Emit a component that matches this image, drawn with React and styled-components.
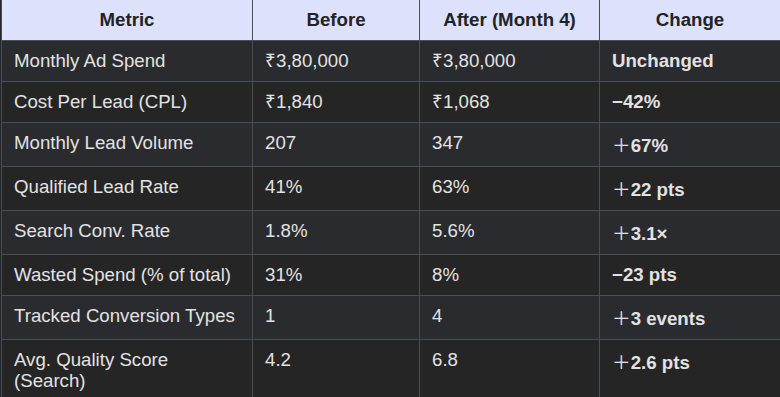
import React from "react";
import styled, { createGlobalStyle } from "styled-components";

const Global = createGlobalStyle`
  html, body { margin: 0; padding: 0; background: #252525; }
  body { font-family: "Liberation Sans", Arial, "Noto Sans CJK SC", sans-serif; }
`;

const Table = styled.table`
  margin-left: 1px;
  width: 779px;
  border-collapse: separate;
  border-spacing: 0;
  border-left: 1px solid #4a4e58;
  table-layout: fixed;
  font-size: 18.67px;
  line-height: 21px;
`;

const Th = styled.th`
  background: #dde1fc;
  color: #222327;
  font-weight: 700;
  text-align: center;
  padding: 9px 12px 10px;
  border-right: 1px solid #4a4e58;
  border-bottom: 1px solid #4a4e58;
`;

const Row = styled.tr`
  background: ${(p) => (p.$alt ? "#252525" : "#2a2b2f")};
`;

const Td = styled.td`
  color: #e2e2e2;
  font-weight: ${(p) => (p.$bold ? 700 : 400)};
  text-align: left;
  vertical-align: top;
  padding: 9px 12px 10px;
  border-right: 1px solid #4a4e58;
  border-bottom: 1px solid #4a4e58;
`;

const Plus = styled.span`
  font-family: "Noto Sans CJK SC", sans-serif;
  font-weight: 400;
  line-height: 23px;
`;

const rows = [
  ["Monthly Ad Spend", "₹3,80,000", "₹3,80,000", "Unchanged"],
  ["Cost Per Lead (CPL)", "₹1,840", "₹1,068", "−42%"],
  ["Monthly Lead Volume", "207", "347", "+67%"],
  ["Qualified Lead Rate", "41%", "63%", "+22 pts"],
  ["Search Conv. Rate", "1.8%", "5.6%", "+3.1×"],
  ["Wasted Spend (% of total)", "31%", "8%", "−23 pts"],
  ["Tracked Conversion Types", "1", "4", "+3 events"],
  ["Avg. Quality Score\n(Search)", "4.2", "6.8", "+2.6 pts"],
];

function Change({ value }) {
  if (value.startsWith("+")) {
    return (
      <>
        <Plus>＋</Plus>
        {value.slice(1)}
      </>
    );
  }
  return value;
}

function Metric({ text }) {
  const parts = text.split("\n");
  return parts.map((p, i) => (
    <React.Fragment key={i}>
      {i > 0 && <br />}
      {p}
    </React.Fragment>
  ));
}

export default function App() {
  return (
    <>
      <Global />
      <Table>
        <colgroup>
          <col style={{ width: 251 }} />
          <col style={{ width: 167 }} />
          <col style={{ width: 180 }} />
          <col style={{ width: 181 }} />
        </colgroup>
        <thead>
          <tr>
            <Th>Metric</Th>
            <Th>Before</Th>
            <Th>After (Month 4)</Th>
            <Th>Change</Th>
          </tr>
        </thead>
        <tbody>
          {rows.map((r, i) => (
            <Row key={i} $alt={i % 2 === 1}>
              <Td>
                <Metric text={r[0]} />
              </Td>
              <Td>{r[1]}</Td>
              <Td>{r[2]}</Td>
              <Td $bold>
                <Change value={r[3]} />
              </Td>
            </Row>
          ))}
        </tbody>
      </Table>
    </>
  );
}
